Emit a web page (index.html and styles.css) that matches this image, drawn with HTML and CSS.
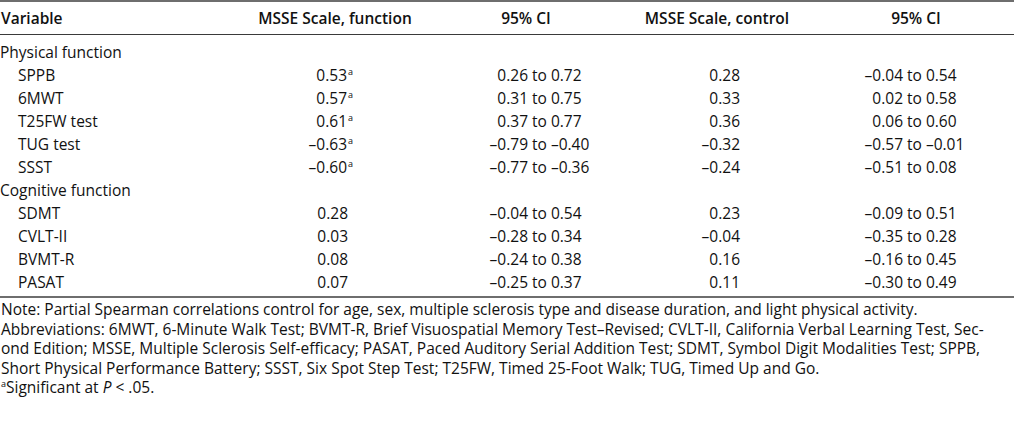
FILE: index.html
```html
<!DOCTYPE html>
<html lang="en">
<head>
<meta charset="utf-8">
<title>MSSE correlations</title>
<link rel="stylesheet" href="styles.css">
</head>
<body>
<table class="data">
  <colgroup>
    <col class="c1"><col class="c2"><col class="c3"><col class="c4"><col class="c5">
  </colgroup>
  <thead>
    <tr>
      <th class="var">Variable</th>
      <th class="h2">MSSE Scale, function</th>
      <th class="h3">95% CI</th>
      <th class="h4">MSSE Scale, control</th>
      <th class="h5">95% CI</th>
    </tr>
  </thead>
  <tbody>
    <tr class="first">
      <td class="group" colspan="5">Physical function</td>
    </tr>
    <tr>
      <td class="sub">SPPB</td>
      <td class="num">0.53<sup class="sig">a</sup></td>
      <td class="ci"><span class="lo">0.26</span> to 0.72</td>
      <td class="num2">0.28</td>
      <td class="ci2"><span class="lo">–0.04</span> to 0.54</td>
    </tr>
    <tr>
      <td class="sub">6MWT</td>
      <td class="num">0.57<sup class="sig">a</sup></td>
      <td class="ci"><span class="lo">0.31</span> to 0.75</td>
      <td class="num2">0.33</td>
      <td class="ci2"><span class="lo">0.02</span> to 0.58</td>
    </tr>
    <tr>
      <td class="sub">T25FW test</td>
      <td class="num">0.61<sup class="sig">a</sup></td>
      <td class="ci"><span class="lo">0.37</span> to 0.77</td>
      <td class="num2">0.36</td>
      <td class="ci2"><span class="lo">0.06</span> to 0.60</td>
    </tr>
    <tr>
      <td class="sub">TUG test</td>
      <td class="num">–0.63<sup class="sig">a</sup></td>
      <td class="ci"><span class="lo">–0.79</span> to –0.40</td>
      <td class="num2">–0.32</td>
      <td class="ci2"><span class="lo">–0.57</span> to –0.01</td>
    </tr>
    <tr>
      <td class="sub">SSST</td>
      <td class="num">–0.60<sup class="sig">a</sup></td>
      <td class="ci"><span class="lo">–0.77</span> to –0.36</td>
      <td class="num2">–0.24</td>
      <td class="ci2"><span class="lo">–0.51</span> to 0.08</td>
    </tr>
    <tr>
      <td class="group" colspan="5">Cognitive function</td>
    </tr>
    <tr>
      <td class="sub">SDMT</td>
      <td class="num">0.28</td>
      <td class="ci"><span class="lo">–0.04</span> to 0.54</td>
      <td class="num2">0.23</td>
      <td class="ci2"><span class="lo">–0.09</span> to 0.51</td>
    </tr>
    <tr>
      <td class="sub">CVLT-II</td>
      <td class="num">0.03</td>
      <td class="ci"><span class="lo">–0.28</span> to 0.34</td>
      <td class="num2">–0.04</td>
      <td class="ci2"><span class="lo">–0.35</span> to 0.28</td>
    </tr>
    <tr>
      <td class="sub">BVMT-R</td>
      <td class="num">0.08</td>
      <td class="ci"><span class="lo">–0.24</span> to 0.38</td>
      <td class="num2">0.16</td>
      <td class="ci2"><span class="lo">–0.16</span> to 0.45</td>
    </tr>
    <tr class="last">
      <td class="sub">PASAT</td>
      <td class="num">0.07</td>
      <td class="ci"><span class="lo">–0.25</span> to 0.37</td>
      <td class="num2">0.11</td>
      <td class="ci2"><span class="lo">–0.30</span> to 0.49</td>
    </tr>
  </tbody>
</table>
<div class="notes">
  <p>Note: Partial Spearman correlations control for age, sex, multiple sclerosis type and disease duration, and light physical activity.</p>
  <p>Abbreviations: 6MWT, 6-Minute Walk Test; BVMT-R, Brief Visuospatial Memory Test–Revised; CVLT-II, California Verbal Learning Test, Sec-<br>ond Edition; MSSE, Multiple Sclerosis Self-efficacy; PASAT, Paced Auditory Serial Addition Test; SDMT, Symbol Digit Modalities Test; SPPB,<br>Short Physical Performance Battery; SSST, Six Spot Step Test; T25FW, Timed 25-Foot Walk; TUG, Timed Up and Go.</p>
  <p><sup class="fn">a</sup>Significant at <i>P</i> &lt; .05.</p>
</div>
</body>
</html>
```

FILE: styles.css
```css
html, body {
  margin: 0;
  padding: 0;
  background: #ffffff;
}

body {
  font-family: "Open Sans", Lato, "Liberation Sans", sans-serif;
  color: #111111;
  font-size: 15.5px;
}

.data {
  width: 1014px;
  table-layout: fixed;
  border-collapse: collapse;
  border-top: 2px solid #6e6e6e;
  border-bottom: 2px solid #6e6e6e;
}

.c1 { width: 250px; }
.c2 { width: 170px; }
.c3 { width: 212px; }
.c4 { width: 170px; }
.c5 { width: 212px; }

.data th {
  font-weight: 600;
  height: 32px;
  padding: 0;
  text-align: center;
  line-height: 20px;
  border-bottom: 1px solid #3a3a3a;
  white-space: nowrap;
}

.data th.var {
  text-align: left;
  padding-left: 1px;
}

.data th.h5 {
  padding-left: 16px;
}

.data td {
  padding: 0;
  line-height: 23px;
  white-space: nowrap;
}

.data tr.first td {
  padding-top: 6px;
}

.data tr.last td {
  padding-bottom: 2px;
}

.group {
  padding-left: 1px;
}

.data td.sub {
  padding-left: 18px;
}

.data td.num {
  text-align: right;
  padding-right: 72px;
}

.data td.num2 {
  text-align: right;
  padding-right: 62px;
}

.sig {
  display: inline-block;
  width: 0;
  font-size: 9px;
  line-height: 0;
  vertical-align: 6px;
  padding-left: 1px;
}

.ci .lo {
  display: inline-block;
  width: 108px;
  text-align: right;
}

.ci2 .lo {
  display: inline-block;
  width: 101px;
  text-align: right;
}

.notes {
  padding-top: 2px;
}

.notes p {
  margin: 0;
  line-height: 19.5px;
  white-space: nowrap;
  padding-left: 1px;
}

.fn {
  font-size: 9px;
  line-height: 0;
  vertical-align: 6px;
}
```
